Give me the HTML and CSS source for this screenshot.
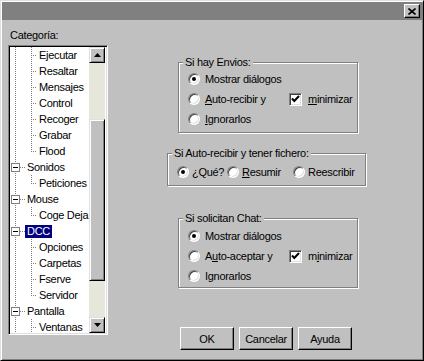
FILE: index.html
```html
<!DOCTYPE html>
<html lang="es">
<head>
    <meta charset="UTF-8">
    <title>Opciones</title>
    <link rel="stylesheet" href="styles.css">
</head>
<body>
    <div class="window">
        <!-- Title bar -->
        <div class="titlebar">
            <button class="close-btn" type="button">
                <svg width="8" height="7" viewBox="0 0 8 7"><path d="M0.5 0.5 L7.5 6.5 M7.5 0.5 L0.5 6.5" stroke="#000" stroke-width="1.6" fill="none"/></svg>
            </button>
        </div>

        <div class="dialog">
            <!-- Category tree -->
            <div class="category">
                <div class="cat-label">Categoría:</div>
                <div class="tree-box">
                    <div class="tree">
                        <div class="row"><span class="g0 line"></span><span class="g1 tee"></span><span class="label">Ejecutar</span></div>
                        <div class="row"><span class="g0 line"></span><span class="g1 tee"></span><span class="label">Resaltar</span></div>
                        <div class="row"><span class="g0 line"></span><span class="g1 tee"></span><span class="label">Mensajes</span></div>
                        <div class="row"><span class="g0 line"></span><span class="g1 tee"></span><span class="label">Control</span></div>
                        <div class="row"><span class="g0 line"></span><span class="g1 tee"></span><span class="label">Recoger</span></div>
                        <div class="row"><span class="g0 line"></span><span class="g1 tee"></span><span class="label">Grabar</span></div>
                        <div class="row"><span class="g0 line"></span><span class="g1 end"></span><span class="label">Flood</span></div>
                        <div class="row"><span class="g0 root"><span class="expander"></span></span><span class="label">Sonidos</span></div>
                        <div class="row"><span class="g0 line"></span><span class="g1 end"></span><span class="label">Peticiones</span></div>
                        <div class="row"><span class="g0 root"><span class="expander"></span></span><span class="label">Mouse</span></div>
                        <div class="row"><span class="g0 line"></span><span class="g1 end"></span><span class="label">Coge Deja</span></div>
                        <div class="row"><span class="g0 root"><span class="expander"></span></span><span class="label selected">DCC</span></div>
                        <div class="row"><span class="g0 line"></span><span class="g1 tee"></span><span class="label">Opciones</span></div>
                        <div class="row"><span class="g0 line"></span><span class="g1 tee"></span><span class="label">Carpetas</span></div>
                        <div class="row"><span class="g0 line"></span><span class="g1 tee"></span><span class="label">Fserve</span></div>
                        <div class="row"><span class="g0 line"></span><span class="g1 end"></span><span class="label">Servidor</span></div>
                        <div class="row"><span class="g0 root"><span class="expander"></span></span><span class="label">Pantalla</span></div>
                        <div class="row"><span class="g0 line"></span><span class="g1 tee"></span><span class="label">Ventanas</span></div>
                    </div>
                    <div class="scrollbar">
                        <div class="sb-btn">
                            <svg width="7" height="4" viewBox="0 0 7 4"><polygon points="3.5,0 7,4 0,4" fill="#000"/></svg>
                        </div>
                        <div class="sb-track"><div class="sb-thumb"></div></div>
                        <div class="sb-btn">
                            <svg width="7" height="4" viewBox="0 0 7 4"><polygon points="0,0 7,0 3.5,4" fill="#000"/></svg>
                        </div>
                    </div>
                </div>
            </div>

            <!-- Options -->
            <div class="options">
                <fieldset class="group group-send">
                    <legend>Si hay Envios:</legend>
                    <div class="opt-row">
                        <span class="option first"><span class="radio checked"></span>Mostrar diálogos</span>
                    </div>
                    <div class="opt-row">
                        <span class="option first"><span class="radio"></span><span><u>A</u>uto-recibir y</span></span>
                        <span class="option check-opt"><span class="checkbox"><svg width="9" height="8" viewBox="0 0 9 8"><polyline points="1,3.5 3.3,6 8,1" stroke="#000" stroke-width="2" fill="none"/></svg></span><span><u>m</u>inimizar</span></span>
                    </div>
                    <div class="opt-row">
                        <span class="option first"><span class="radio"></span><span><u>I</u>gnorarlos</span></span>
                    </div>
                </fieldset>

                <fieldset class="group group-file">
                    <legend>Si Auto-recibir y tener fichero:</legend>
                    <div class="opt-row">
                        <span class="option opt-what"><span class="radio checked"></span>¿Qué?</span>
                        <span class="option opt-resume"><span class="radio"></span><span><u>R</u>esumir</span></span>
                        <span class="option"><span class="radio"></span>Reescribir</span>
                    </div>
                </fieldset>

                <fieldset class="group group-chat">
                    <legend>Si solicitan Chat:</legend>
                    <div class="opt-row">
                        <span class="option first"><span class="radio checked"></span>Mostrar diálogos</span>
                    </div>
                    <div class="opt-row">
                        <span class="option first"><span class="radio"></span><span>A<u>u</u>to-aceptar y</span></span>
                        <span class="option check-opt"><span class="checkbox"><svg width="9" height="8" viewBox="0 0 9 8"><polyline points="1,3.5 3.3,6 8,1" stroke="#000" stroke-width="2" fill="none"/></svg></span><span>m<u>i</u>nimizar</span></span>
                    </div>
                    <div class="opt-row">
                        <span class="option first"><span class="radio"></span>Ignorarlos</span>
                    </div>
                </fieldset>

                <div class="buttons">
                    <button class="btn" type="button">OK</button>
                    <button class="btn" type="button">Cancelar</button>
                    <button class="btn" type="button">Ayuda</button>
                </div>
            </div>
        </div>
    </div>
</body>
</html>
```

FILE: styles.css
```css
* {
    box-sizing: border-box;
}

body {
    margin: 0;
    background-color: #c0c0c0;
    font-family: "Liberation Sans", Arial, sans-serif;
    font-size: 11px;
    letter-spacing: -0.3px;
    color: #000;
}

/* Window frame */
.window {
    width: 424px;
    height: 361px;
    padding: 1px;
    border: 1px solid;
    border-color: #dfdfdf #000 #000 #dfdfdf;
    box-shadow: inset 1px 1px #fff, inset -1px -1px #808080;
    background-color: #c0c0c0;
    display: flex;
    flex-direction: column;
}

.titlebar {
    height: 18px;
    background-color: #808080;
    display: flex;
    justify-content: flex-end;
    align-items: center;
    padding-right: 2px;
}

.close-btn {
    width: 16px;
    height: 14px;
    padding: 0;
    background-color: #c0c0c0;
    border: 1px solid;
    border-color: #fff #000 #000 #fff;
    box-shadow: inset -1px -1px #808080;
    display: flex;
    justify-content: center;
    align-items: center;
}

.dialog {
    flex: 1;
    display: flex;
    padding: 9px 0 0 6px;
}

/* Category tree */
.category {
    width: 100px;
}

.cat-label {
    line-height: 13px;
    padding-left: 2px;
    margin-bottom: 3px;
}

.tree-box {
    height: 290px;
    padding: 1px;
    border: 1px solid;
    border-color: #808080 #fff #fff #808080;
    box-shadow: inset 1px 1px #000, inset -1px -1px #dfdfdf;
    background-color: #fff;
    display: flex;
}

.tree {
    width: 79px;
    overflow: hidden;
}

.row {
    height: 16px;
    display: flex;
    align-items: center;
    white-space: nowrap;
}

.g0 {
    flex: none;
    width: 15px;
    height: 16px;
}

.g1 {
    flex: none;
    width: 12px;
    height: 16px;
}

.line {
    background: repeating-linear-gradient(to bottom, #808080 0 1px, transparent 1px 2px) 5px 0 / 1px 16px no-repeat;
}

.tee {
    background:
        repeating-linear-gradient(to bottom, #808080 0 1px, transparent 1px 2px) 6px 0 / 1px 16px no-repeat,
        repeating-linear-gradient(to right, #808080 0 1px, transparent 1px 2px) 6px 8px / 6px 1px no-repeat;
}

.end {
    background:
        repeating-linear-gradient(to bottom, #808080 0 1px, transparent 1px 2px) 6px 0 / 1px 9px no-repeat,
        repeating-linear-gradient(to right, #808080 0 1px, transparent 1px 2px) 6px 8px / 6px 1px no-repeat;
}

.root {
    width: 15px;
    display: flex;
    align-items: center;
    padding-left: 1px;
    background:
        repeating-linear-gradient(to bottom, #808080 0 1px, transparent 1px 2px) 5px 0 / 1px 16px no-repeat,
        repeating-linear-gradient(to right, #808080 0 1px, transparent 1px 2px) 10px 8px / 5px 1px no-repeat;
}

.expander {
    width: 9px;
    height: 9px;
    border: 1px solid #808080;
    background: #fff linear-gradient(#000, #000) 1px 3px / 5px 1px no-repeat;
}

.label {
    line-height: 13px;
    padding: 0 2px;
}

.label.selected {
    background-color: #000080;
    color: #fff;
}

/* Scrollbar */
.scrollbar {
    width: 16px;
    display: flex;
    flex-direction: column;
    background-color: #e6e6da;
}

.sb-btn,
.sb-thumb {
    background-color: #c0c0c0;
    border: 1px solid;
    border-color: #dfdfdf #000 #000 #dfdfdf;
    box-shadow: inset 1px 1px #fff, inset -1px -1px #808080;
}

.sb-btn {
    height: 16px;
    display: flex;
    justify-content: center;
    align-items: center;
}

.sb-track {
    flex: 1;
}

.sb-thumb {
    margin-top: 56px;
    height: 162px;
}

/* Option groups */
.options {
    flex: 1;
    padding: 27px 0 0 59px;
}

.group {
    margin: 0;
    padding: 0 0 0 9px;
    border: 1px solid #808080;
    box-shadow: inset 1px 1px #fff, 1px 1px #fff;
    min-inline-size: 0;
}

.group legend {
    line-height: 13px;
    padding: 0 2px;
    margin-left: -5px;
    background-color: #c0c0c0;
}

.group-send {
    width: 180px;
    margin-left: 11px;
    padding-bottom: 3px;
}

.group-file {
    width: 199px;
    margin-top: 14px;
    padding-top: 2px;
    padding-bottom: 3px;
}

.group-chat {
    width: 180px;
    margin-left: 11px;
    margin-top: 26px;
    padding-top: 1px;
    padding-bottom: 1px;
}

.opt-row {
    height: 20px;
    display: flex;
    align-items: center;
    white-space: nowrap;
}

.option {
    display: flex;
    align-items: center;
    gap: 5px;
}

.option.first {
    width: 101px;
}

.group-file .option {
    gap: 3px;
}

.option.opt-what {
    width: 50px;
}

.option.opt-resume {
    width: 66px;
}

.check-opt {
    gap: 6px;
}

.radio {
    flex: none;
    width: 12px;
    height: 12px;
    border-radius: 50%;
    border: 1px solid;
    border-color: #808080 #fff #fff #808080;
    box-shadow: inset 1px 1px #404040, inset -1px -1px #dfdfdf;
    background-color: #fff;
    display: flex;
    justify-content: center;
    align-items: center;
}

.radio.checked::after {
    content: "";
    width: 4px;
    height: 4px;
    border-radius: 50%;
    background-color: #000;
}

.checkbox {
    flex: none;
    width: 13px;
    height: 13px;
    border: 1px solid;
    border-color: #808080 #fff #fff #808080;
    box-shadow: inset 1px 1px #404040, inset -1px -1px #dfdfdf;
    background-color: #fff;
    display: flex;
    justify-content: center;
    align-items: center;
}

/* Buttons */
.buttons {
    display: flex;
    gap: 5px;
    margin: 39px 0 0 13px;
}

.btn {
    width: 54px;
    height: 23px;
    padding: 0;
    font-family: "Liberation Sans", Arial, sans-serif;
    font-size: 11px;
    letter-spacing: -0.3px;
    color: #000;
    background-color: #c0c0c0;
    border: 1px solid;
    border-color: #fff #000 #000 #fff;
    box-shadow: inset -1px -1px #808080;
}
```
